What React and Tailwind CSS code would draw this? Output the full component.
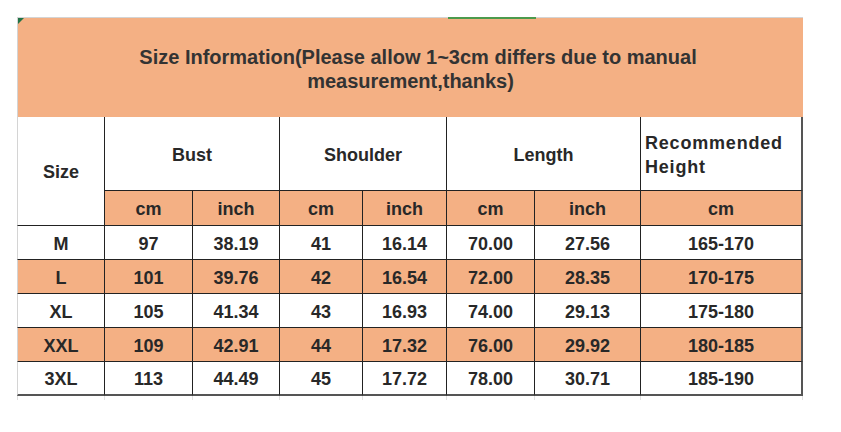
import React from "react";

const units = ["cm", "inch", "cm", "inch", "cm", "inch", "cm"];

const rows = [
  ["M", "97", "38.19", "41", "16.14", "70.00", "27.56", "165-170"],
  ["L", "101", "39.76", "42", "16.54", "72.00", "28.35", "170-175"],
  ["XL", "105", "41.34", "43", "16.93", "74.00", "29.13", "175-180"],
  ["XXL", "109", "42.91", "44", "17.32", "76.00", "29.92", "180-185"],
  ["3XL", "113", "44.49", "45", "17.72", "78.00", "30.71", "185-190"],
];

const SizeChart = () => {
  return (
    <div
      className="w-[841px] h-[432px] bg-white pt-[17px] pl-[17px] text-[#282828] font-bold text-[18px]"
      style={{ fontFamily: '"Liberation Sans", Arial, sans-serif' }}
    >
      <div className="grid grid-cols-[88px_88px_87px_83px_84px_88px_106px_162px] w-[786px]">
        {/* title */}
        <div className="relative col-span-8 h-[100px] bg-[#f4b084] border-t border-l border-[#d4d4d4] flex flex-col items-center justify-center text-[20px] leading-[24px] pt-[2px] text-[#333]">
          <div className="absolute -top-px left-[430px] w-[88px] h-[2px] bg-[#4c9a4c]" />
          <svg className="absolute top-0 left-0" width="6" height="6" viewBox="0 0 6 6">
            <polygon points="0,0 6,0 0,6" fill="#217346" />
          </svg>
          <span className="pl-[15px]">Size Information(Please allow 1~3cm differs due to manual</span>
          <span>measurement,thanks)</span>
        </div>

        {/* group headers */}
        <div className="row-span-2 border-l border-l-[#d4d4d4] border-r border-b border-[#222] flex items-center justify-center pt-[3px]">
          Size
        </div>
        <div className="col-span-2 h-[74px] border-r border-b border-[#222] flex items-center justify-center pt-[3px]">Bust</div>
        <div className="col-span-2 h-[74px] border-r border-b border-[#222] flex items-center justify-center pt-[3px]">Shoulder</div>
        <div className="col-span-2 h-[74px] border-r border-b border-[#222] flex items-center justify-center pt-[3px]">Length</div>
        <div className="h-[74px] border-r-2 border-r-[#555] border-b border-b-[#222] flex flex-col justify-center pl-[4px] pt-[3px] leading-[24px] tracking-[0.8px]">
          <span>Recommended</span>
          <span>Height</span>
        </div>

        {/* units */}
        {units.map((u, i) => (
          <div
            key={i}
            className={`h-[35px] bg-[#f4b084] border-b border-[#222] flex items-center justify-center pt-[3px] ${
              i === 6 ? "border-r-2 border-r-[#555]" : "border-r border-r-[#222]"
            }`}
          >
            {u}
          </div>
        ))}

        {/* data */}
        {rows.map((r, ri) =>
          r.map((v, ci) => (
            <div
              key={ri + "-" + ci}
              className={`h-[34px] flex items-center justify-center pt-[3px] ${
                ri % 2 === 1 ? "bg-[#f4b084]" : "bg-white"
              } ${ri === rows.length - 1 ? "border-b-2 border-b-[#555]" : "border-b border-b-[#222]"} ${
                ci === 7 ? "border-r-2 border-r-[#555]" : "border-r border-r-[#222]"
              } ${ci === 0 ? "border-l border-l-[#d4d4d4]" : ""}`}
            >
              {v}
            </div>
          ))
        )}

        {/* gridline ticks below */}
        {[0, 1, 2, 3, 4, 5, 6, 7].map((i) => (
          <div
            key={i}
            className={`h-[4px] border-r border-r-[#e0e0e0] ${i === 0 ? "border-l border-l-[#e0e0e0]" : ""}`}
          />
        ))}
      </div>
    </div>
  );
};

export default function App() {
  return <SizeChart />;
}
